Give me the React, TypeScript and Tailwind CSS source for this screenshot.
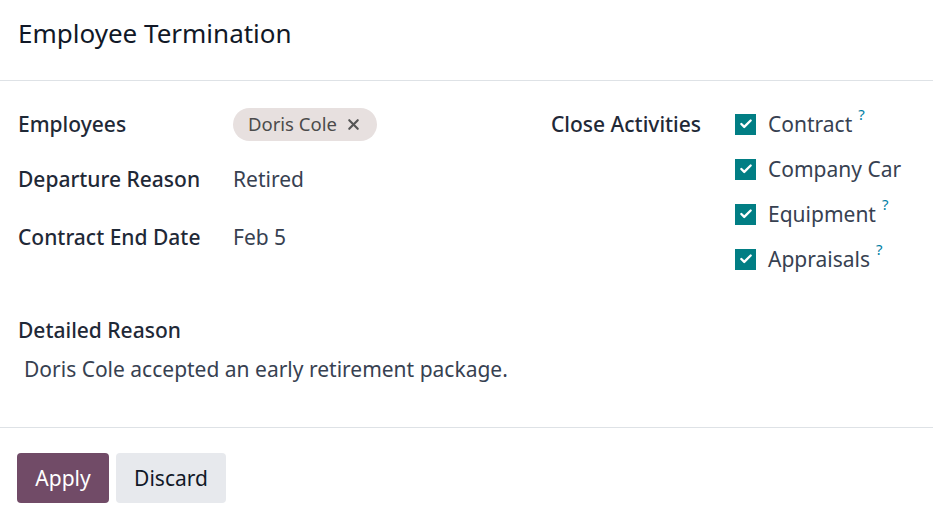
import { Check, X } from 'lucide-react'

const ACTIVITIES = [
    { label: 'Contract', help: true },
    { label: 'Company Car', help: false },
    { label: 'Equipment', help: true },
    { label: 'Appraisals', help: true },
]

function Field({ label, children, className = '' }: { label: string; children: React.ReactNode; className?: string }) {
    return (
        <div className={`flex items-center ${className}`}>
            <div className="w-[215px] shrink-0 font-medium text-[#1f2937]">{label}</div>
            <div className="text-[#374151]">{children}</div>
        </div>
    )
}

export default function App() {
    return (
        <div className="w-[933px] h-[527px] bg-white text-[21px] leading-[30px] text-[#1f2937] font-['Noto_Sans',sans-serif]">
            {/* Header */}
            <div className="h-[81px] border-b border-[#dee2e6] px-[18px] pt-[15px]">
                <h1 className="text-[26px] leading-[36px] text-[#111827]">Employee Termination</h1>
            </div>

            {/* Body */}
            <div className="h-[347px] border-b border-[#dee2e6] px-[18px] pt-[26px]">
                <div className="flex">
                    <div className="w-[533px] shrink-0">
                        <Field label="Employees" className="h-[34px]">
                            <span className="inline-flex items-center gap-2 h-[33px] rounded-full bg-[#e7e0df] pl-[15px] pr-[15px] text-[18.5px] text-[#4b4b4b]">
                                Doris Cole
                                <X size={17} strokeWidth={3} className="text-[#555]" />
                            </span>
                        </Field>
                        <Field label="Departure Reason" className="mt-[21px] h-[34px]">Retired</Field>
                        <Field label="Contract End Date" className="mt-[24px] h-[34px]">Feb 5</Field>
                    </div>
                    <div className="flex">
                        <div className="w-[184px] shrink-0 font-medium h-[34px] flex items-center">Close Activities</div>
                        <div className="flex flex-col gap-[11px]">
                            {ACTIVITIES.map(a => (
                                <div key={a.label} className="flex items-center h-[34px] text-[#374151]">
                                    <span className="w-[21px] h-[21px] bg-[#017e84] flex items-center justify-center mr-[12px]">
                                        <Check size={14} strokeWidth={4} className="text-white" />
                                    </span>
                                    {a.label}
                                    {a.help && <sup className="ml-[6px] text-[15px] text-[#0180a5] -top-[0.7em]">?</sup>}
                                </div>
                            ))}
                        </div>
                    </div>
                </div>

                <div className="mt-[39px] font-medium">Detailed Reason</div>
                <div className="mt-[9px] pl-[6px] text-[#374151]">Doris Cole accepted an early retirement package.</div>
            </div>

            {/* Footer */}
            <div className="flex gap-[7px] px-[17px] pt-[25px]">
                <button className="w-[92px] h-[50px] rounded-[4px] bg-[#714b67] text-white">Apply</button>
                <button className="w-[110px] h-[50px] rounded-[4px] bg-[#e7e9ed] text-[#111827]">Discard</button>
            </div>
        </div>
    )
}
